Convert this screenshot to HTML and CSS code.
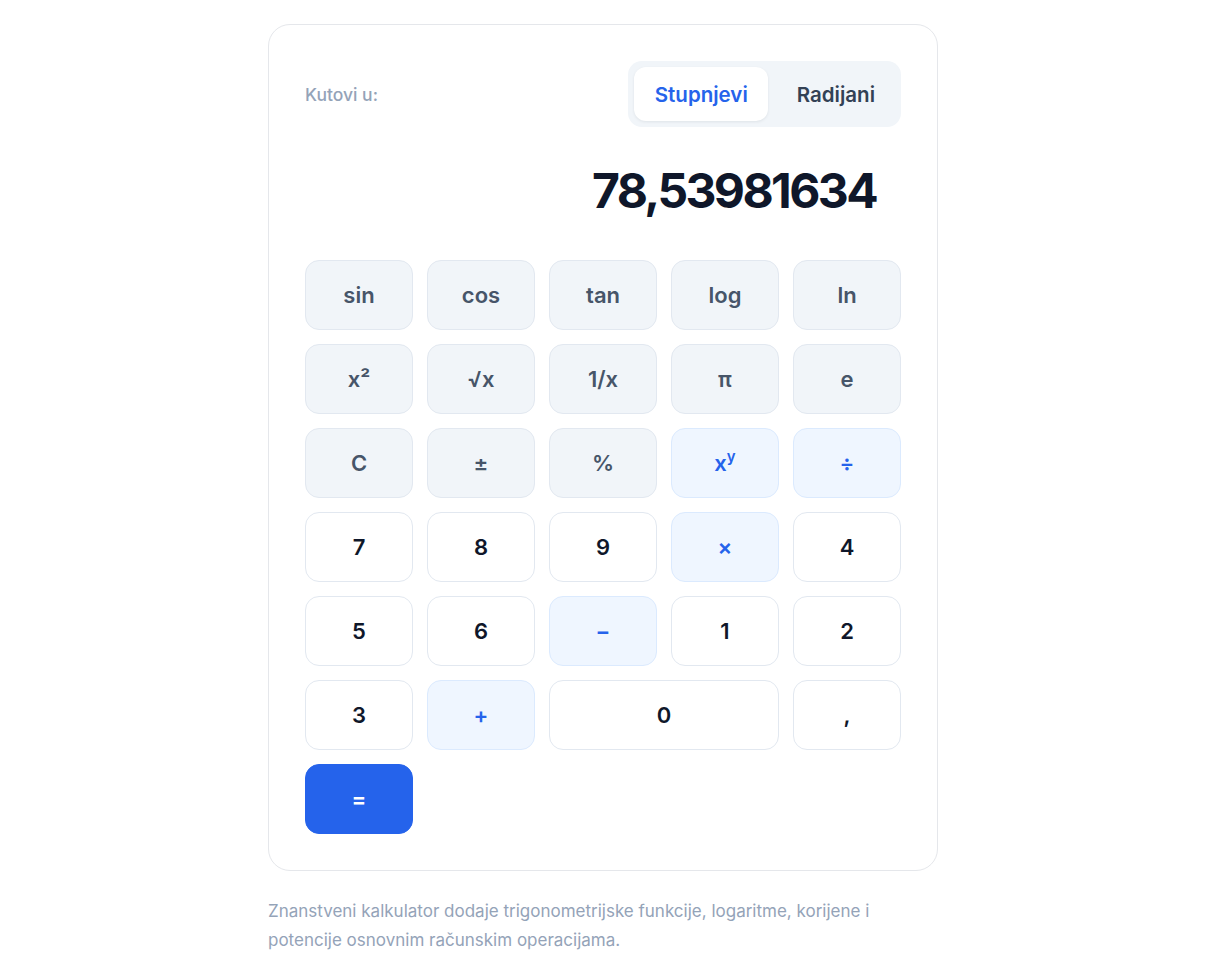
FILE: index.html
```html
<!DOCTYPE html>
<html lang="hr">
<head>
<meta charset="utf-8">
<title>Znanstveni kalkulator</title>
<link rel="stylesheet" href="styles.css">
</head>
<body>
<main class="wrap">
  <section class="card">
    <div class="head">
      <span class="label">Kutovi u:</span>
      <div class="toggle">
        <button class="tg active">Stupnjevi</button>
        <button class="tg">Radijani</button>
      </div>
    </div>
    <div class="display">78,53981634</div>
    <div class="keys">
      <button class="k fn">sin</button>
      <button class="k fn">cos</button>
      <button class="k fn">tan</button>
      <button class="k fn">log</button>
      <button class="k fn">ln</button>
      <button class="k fn">x²</button>
      <button class="k fn">√x</button>
      <button class="k fn">1/x</button>
      <button class="k fn">π</button>
      <button class="k fn">e</button>
      <button class="k fn">C</button>
      <button class="k fn">±</button>
      <button class="k fn">%</button>
      <button class="k op">x<sup>y</sup></button>
      <button class="k op">÷</button>
      <button class="k num">7</button>
      <button class="k num">8</button>
      <button class="k num">9</button>
      <button class="k op">×</button>
      <button class="k num">4</button>
      <button class="k num">5</button>
      <button class="k num">6</button>
      <button class="k op">−</button>
      <button class="k num">1</button>
      <button class="k num">2</button>
      <button class="k num">3</button>
      <button class="k op">+</button>
      <button class="k num wide">0</button>
      <button class="k num">,</button>
      <button class="k eq">=</button>
    </div>
  </section>
  <p class="note">Znanstveni kalkulator dodaje trigonometrijske funkcije, logaritme, korijene i potencije osnovnim računskim operacijama.</p>
</main>
</body>
</html>
```
FILE: styles.css
```css
* { box-sizing: border-box; }
html, body { margin: 0; padding: 0; background: #ffffff; }
body {
  font-family: Inter, "Noto Sans", "Liberation Sans", sans-serif;
  color: #0f172a;
  padding-top: 24px;
}
.wrap {
  width: 670px;
  margin: 0 auto;
}
.card {
  border: 1px solid #e5e7eb;
  border-radius: 22px;
  padding: 36px;
  background: #fff;
}
.head {
  display: flex;
  align-items: center;
  justify-content: space-between;
}
.label {
  font-size: 17.5px;
  font-weight: 500;
  color: #94a3b8;
}
.toggle {
  display: flex;
  gap: 8px;
  background: #f1f5f9;
  border-radius: 14px;
  padding: 6px;
}
.tg {
  font-family: inherit;
  font-size: 20.5px;
  font-weight: 600;
  border: 0;
  background: transparent;
  color: #334155;
  height: 54px;
  padding: 0 20px 0 21px;
  border-radius: 12px;
  cursor: pointer;
}
.tg.active {
  background: #fff;
  color: #2563eb;
  box-shadow: 0 1px 3px rgba(15, 23, 42, 0.08);
}
.display {
  text-align: right;
  font-size: 48px;
  font-weight: 700;
  line-height: 58px;
  letter-spacing: -2.6px;
  color: #0f172a;
  padding: 35px 25px 40px;
}
.keys {
  display: grid;
  grid-template-columns: repeat(5, 108px);
  grid-auto-rows: 70px;
  gap: 14px;
}
.k {
  font-family: inherit;
  font-size: 22px;
  font-weight: 600;
  border-radius: 14px;
  border: 1px solid #e2e8f0;
  cursor: pointer;
  padding: 0;
}
.k.fn { background: #f1f5f9; color: #475569; }
.k.op { background: #eff6ff; color: #2563eb; border-color: #dbeafe; }
.k.num { background: #fff; color: #0f172a; }
.k.eq { background: #2563eb; color: #fff; border-color: #2563eb; }
.k.wide { grid-column: span 2; }
.k sup { font-size: 15px; vertical-align: 9px; line-height: 0; }
.note {
  margin: 26px 0 0;
  font-size: 17px;
  line-height: 29px;
  color: #94a3b8;
}
```
